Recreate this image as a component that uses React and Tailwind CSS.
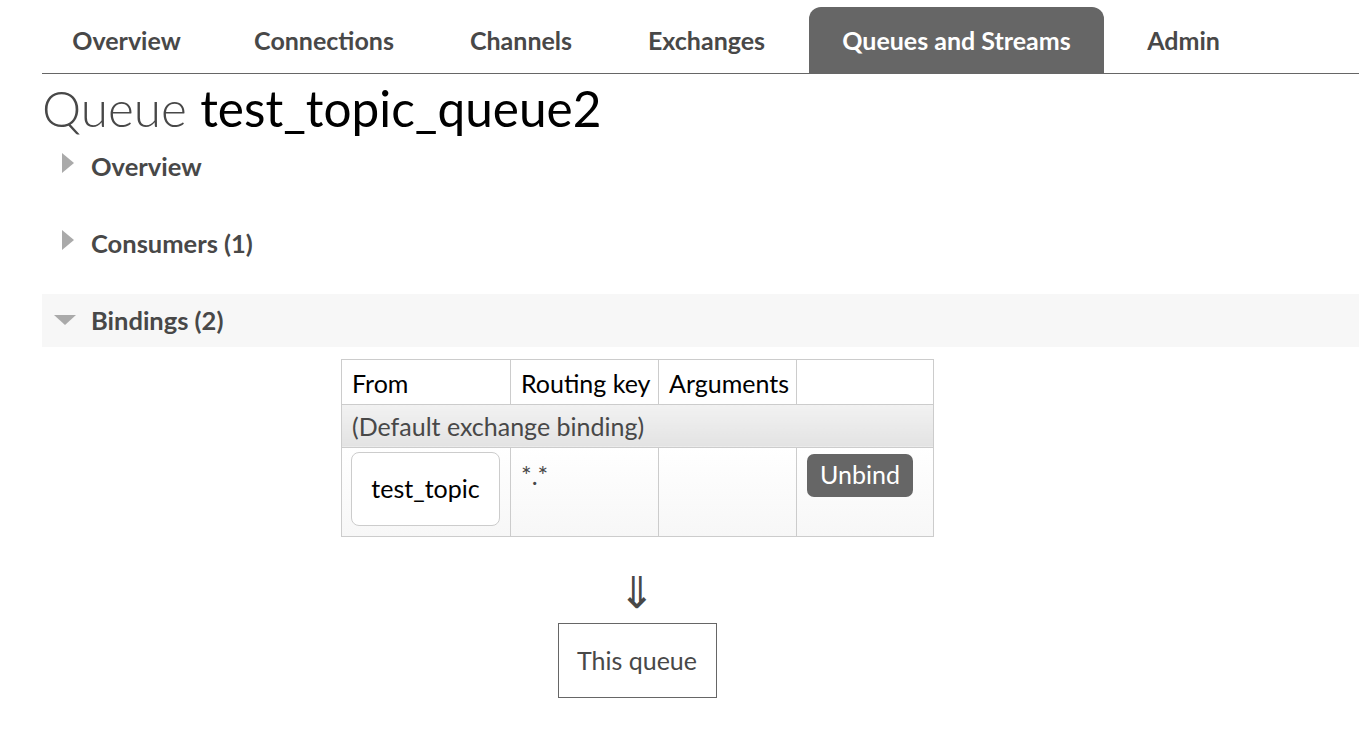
import React from 'react';

const TABS = [
  { name: 'Overview', w: 'w-[167px]' },
  { name: 'Connections', w: 'w-[202px]' },
  { name: 'Channels', w: 'w-[166px]' },
  { name: 'Exchanges', w: 'w-[179px]' },
  { name: 'Queues and Streams', w: 'w-[295px]' },
  { name: 'Admin', w: 'w-[133px]' },
];
const FONT = { fontFamily: 'Lato, "Open Sans", sans-serif' };

function Section({ title, open }) {
  return (
    <div className={`flex items-center h-[53px] ${open ? 'bg-[#f7f7f7]' : ''}`}>
      {open ? (
        <span className="ml-[12px] mr-[15px] w-0 h-0 border-l-[11px] border-r-[11px] border-t-[10px] border-l-transparent border-r-transparent border-t-[#aaa]" />
      ) : (
        <span className="ml-[20px] mr-[17px] w-0 h-0 border-t-[10px] border-b-[10px] border-l-[12px] border-t-transparent border-b-transparent border-l-[#aaa] -mt-[6px]" />
      )}
      <span className="text-[25.5px] font-bold text-[#484848]">{title}</span>
    </div>
  );
}

export default function App() {
  return (
    <div className="w-[1359px] h-[738px] bg-white pl-[42px] overflow-hidden" style={FONT}>
      {/* Tabs */}
      <div className="flex items-end h-[74px] border-b border-[#666] pl-[1px]">
        {TABS.map((t) => (
          <div key={t.name}
            className={`${t.w} h-[66px] mr-[13px] pt-[2px] flex items-center justify-center text-[25px] font-bold rounded-t-[12px] whitespace-nowrap
              ${t.name === 'Queues and Streams' ? 'bg-[#666] text-white' : 'text-[#484848]'}`}>
            {t.name}
          </div>
        ))}
      </div>

      <h1 className="text-[49.5px] leading-[1] mt-[10px] mb-[6px]">
        <span className="text-[#484848] font-light">Queue </span>
        <span className="text-black">test_topic_queue2</span>
      </h1>

      <div className="flex flex-col gap-[24px]">
        <Section title="Overview" />
        <Section title="Consumers (1)" />
        <Section title="Bindings (2)" open />
      </div>

      {/* Bindings table */}
      <div className="pl-[299px] mt-[12px]">
        <table className="table-fixed w-[593px] border-collapse text-[25px] text-black">
          <colgroup>
            <col className="w-[169px]" />
            <col className="w-[148px]" />
            <col className="w-[138px]" />
            <col className="w-[137px]" />
          </colgroup>
          <thead>
            <tr className="h-[45px]">
              <th className="text-left font-normal px-[10px] pt-[4px] border border-[#ccc] whitespace-nowrap">From</th>
              <th className="text-left font-normal px-[10px] pt-[4px] border border-[#ccc] whitespace-nowrap">Routing key</th>
              <th className="text-left font-normal px-[10px] pt-[4px] border border-[#ccc] whitespace-nowrap">Arguments</th>
              <th className="border border-[#ccc]"></th>
            </tr>
          </thead>
          <tbody>
            <tr className="h-[43px]">
              <td colSpan={4} className="px-[10px] pt-[2px] border border-[#ccc] text-[#484848] bg-gradient-to-b from-[#f2f2f2] to-[#e3e3e3]">
                (Default exchange binding)
              </td>
            </tr>
            <tr className="h-[89px] bg-gradient-to-b from-white to-[#f7f7f7]">
              <td className="border border-[#ccc] align-top p-0">
                <div className="mx-[9px] mt-[4px] w-[149px] h-[74px] border border-[#ccc] rounded-[8px] bg-white flex items-center justify-center">
                  test_topic
                </div>
              </td>
              <td className="border border-[#ccc] align-top px-[10px] pt-[12px] text-[#484848] leading-[1.2]">*.*</td>
              <td className="border border-[#ccc]"></td>
              <td className="border border-[#ccc] align-top px-[10px] pt-[6px]">
                <button className="h-[43px] w-[106px] bg-[#666] text-white rounded-[7px]">Unbind</button>
              </td>
            </tr>
          </tbody>
        </table>
      </div>

      <div className="w-[592px] ml-[299px] flex flex-col items-center">
        <div className="text-[44px] leading-none text-[#484848] mt-[34px] h-[50px]" style={{ fontFamily: '"DejaVu Sans", sans-serif' }}>⇓</div>
        <div className="mt-[2px] w-[159px] h-[75px] border border-[#666] flex items-center justify-center pt-[2px] text-[25px] text-[#484848]">
          This queue
        </div>
      </div>
    </div>
  );
}
